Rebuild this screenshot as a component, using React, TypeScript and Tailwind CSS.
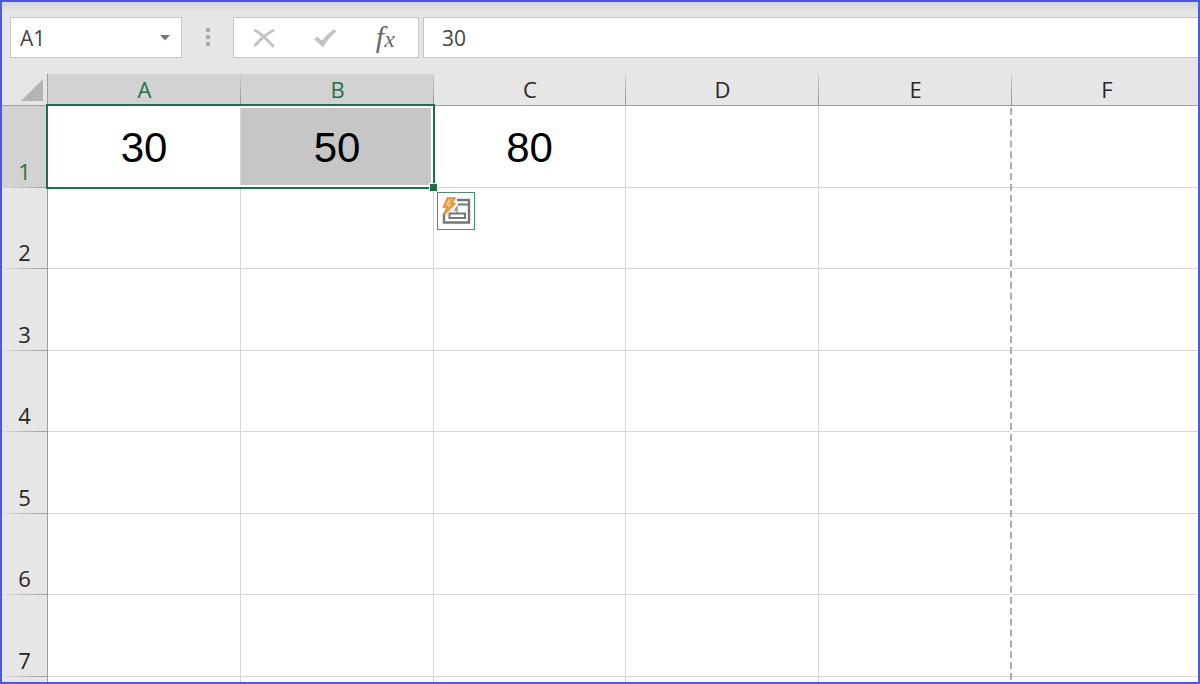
import { useState } from 'react';
import clsx from 'clsx';

const columns = [
  { name: 'A', width: 'w-[193px]' },
  { name: 'B', width: 'w-[193px]' },
  { name: 'C', width: 'w-[192px]' },
  { name: 'D', width: 'w-[193px]' },
  { name: 'E', width: 'w-[193px]' },
  { name: 'F', width: 'w-auto' },
];

const rows = [1, 2, 3, 4, 5, 6, 7];

const values: Record<string, string> = { A1: '30', B1: '50', C1: '80' };

const selectedColumns = ['A', 'B'];

function FormulaBar() {
  const [name, setName] = useState('A1');
  const [formula, setFormula] = useState('30');

  return (
    <div className="flex items-start h-[72px] pt-[15px] pl-2 bg-linear-to-b from-[#d4d4d4] to-[#e6e6e6] to-[10px] text-[21px] text-[#444]">
      <div className="flex items-center w-[172px] h-[41px] bg-white border border-[#c6c6c6]">
        <input
          aria-label="Name box"
          value={name}
          onChange={(e) => setName(e.target.value)}
          className="flex-1 min-w-0 h-full pl-[9px] outline-none"
        />
        <button type="button" aria-label="Open name list" className="w-8 h-full flex items-center justify-center">
          <svg width="10" height="6" viewBox="0 0 10 6" fill="#777">
            <path d="M0 0h10L5 5.5z" />
          </svg>
        </button>
      </div>

      <div className="flex flex-col items-center justify-center gap-[3px] w-[51px] h-10">
        <span className="size-1 bg-[#ababab]" />
        <span className="size-1 bg-[#ababab]" />
        <span className="size-1 bg-[#ababab]" />
      </div>

      <div className="flex items-center justify-around w-[186px] h-[41px] pr-1 bg-white border border-[#c6c6c6]">
        <button type="button" aria-label="Cancel">
          <svg width="22" height="20" viewBox="0 0 22 20" fill="none" stroke="#c3c3c3" strokeLinecap="round">
            <path d="M2.500 2.500Q10 7 20 18" strokeWidth="2.800" />
            <path d="M20 2.500Q10 8 2.500 17" strokeWidth="3" />
          </svg>
        </button>
        <button type="button" aria-label="Enter">
          <svg width="24" height="20" viewBox="0 0 24 20" fill="#c3c3c3">
            <path d="M1 11.500 4 8.500 9 12.500 Q15 5 21 1 L23.500 3.500 Q15 10 10 19.500 Q6 15 1 11.500z" />
          </svg>
        </button>
        <button
          type="button"
          aria-label="Insert function"
          className="font-['Liberation_Serif',serif] italic text-[30px] leading-8 text-[#666]"
        >
          f<span className="text-[24px]">x</span>
        </button>
      </div>

      <input
        aria-label="Formula"
        value={formula}
        onChange={(e) => setFormula(e.target.value)}
        className="flex-1 min-w-0 h-[41px] ml-1 pl-[18px] bg-white border border-r-0 border-[#c6c6c6] outline-none"
      />
    </div>
  );
}

function QuickAnalysisIcon() {
  return (
    <svg width="30" height="30" viewBox="0 0 30 30" fill="none">
      <path d="M16 4h12v22.500H3V17" stroke="#777" strokeWidth="2.400" />
      <path d="M17 8.500h10" stroke="#888" strokeWidth="2.400" />
      <path d="M13.500 15l2.500-4v6" stroke="#999" strokeWidth="1.500" />
      <path d="M8.500 17.500h15.500v4.500H8.500z" stroke="#777" strokeWidth="2" />
      <path d="M6.500 2h7.500L10.500 7.500H14L3 18.500 6 11H2.500z" fill="#f3ae5c" stroke="#e58d2a" strokeWidth="1.500" />
      <path d="M8 4.500 6 9h2.500" stroke="#fbdcb4" />
    </svg>
  );
}

function Selection() {
  return (
    <div className="absolute z-10 -top-0.5 -left-0.5 w-[389px] h-[85px] border-2 border-[#1d7044] shadow-[inset_0_0_0_2px_#fff]">
      <span className="absolute -right-1 -bottom-1 size-[7px] bg-[#1d7044] outline outline-white" />
      <button
        type="button"
        aria-label="Quick analysis"
        className="absolute top-full left-full mt-[5px] ml-1 flex items-center justify-center size-[38px] bg-white border border-[#4c9070]"
      >
        <QuickAnalysisIcon />
      </button>
    </div>
  );
}

export default function App() {
  return (
    <div className="h-screen flex flex-col overflow-hidden border-2 border-[#485aed] bg-[#e6e6e6] font-['Open_Sans','Noto_Sans',sans-serif]">
      <FormulaBar />

      <div className="flex-1 min-h-0 overflow-hidden">
        <table className="w-full table-fixed border-separate border-spacing-0 bg-white text-[22px] leading-6 text-[#262626]">
          <thead>
            <tr className="h-8 bg-[#e6e6e6]">
              <th className="w-[46px] p-0 border-r border-b border-[#9e9e9e]" aria-label="Select all">
                <svg className="ml-auto mr-1" width="22" height="22" viewBox="0 0 22 22" fill="#b4b4b4">
                  <path d="M22 0v22H0z" />
                </svg>
              </th>
              {columns.map((col) => (
                <th
                  key={col.name}
                  scope="col"
                  className={clsx(
                    col.width,
                    'p-0 pb-1 align-bottom font-normal border-b border-[#9e9e9e]',
                    col.name === 'F'
                      ? 'pl-1'
                      : 'bg-[linear-gradient(to_bottom,#d0d0d0,#8e8e8e)] bg-[length:1px_100%] bg-right bg-no-repeat',
                    selectedColumns.includes(col.name) && 'bg-[#d2d2d2] text-[#217346]',
                  )}
                >
                  {col.name}
                </th>
              ))}
            </tr>
          </thead>
          <tbody>
            {rows.map((row) => (
              <tr key={row} className="odd:h-[82px] even:h-[81px]">
                <th
                  scope="row"
                  className={clsx(
                    'p-0 pb-[5px] align-bottom font-normal border-r border-[#9e9e9e]',
                    'bg-[linear-gradient(to_right,#dcdcdc,#9e9e9e)] bg-[length:100%_1px] bg-bottom bg-no-repeat',
                    row === 1 ? 'bg-[#d2d2d2] text-[#217346]' : 'bg-[#e6e6e6]',
                  )}
                >
                  {row}
                </th>
                {columns.map((col) => {
                  const cell = `${col.name}${row}`;
                  return (
                    <td
                      key={cell}
                      className={clsx(
                        'relative p-0 pt-0.5 text-center border-b border-[#d6d6d6]',
                        "font-['Liberation_Sans',sans-serif] text-[42px] leading-12 text-black",
                        col.name !== 'F' && col.name !== 'E' && 'border-r',
                        cell === 'B1' && 'bg-[#c6c6c6]',
                      )}
                    >
                      {values[cell]}
                      {cell === 'A1' && <Selection />}
                      {/* page break, one strip for every two rows */}
                      {col.name === 'E' && row % 2 === 1 && (
                        <span className="absolute z-10 top-0 right-0 w-0.5 h-[163px] bg-[linear-gradient(to_bottom,#fff_2px,#acacac_2px,#acacac_9px,#fff_9px)] bg-[length:2px_11px] bg-repeat-round" />
                      )}
                    </td>
                  );
                })}
              </tr>
            ))}
            {/* top edge of the next row */}
            <tr className="h-2">
              <td className="p-0 bg-[#e6e6e6] border-r border-[#9e9e9e]" />
              {columns.map((col) => (
                <td
                  key={col.name}
                  className={clsx('p-0 border-[#d6d6d6]', col.name !== 'F' && col.name !== 'E' && 'border-r')}
                />
              ))}
            </tr>
          </tbody>
        </table>
      </div>
    </div>
  );
}
